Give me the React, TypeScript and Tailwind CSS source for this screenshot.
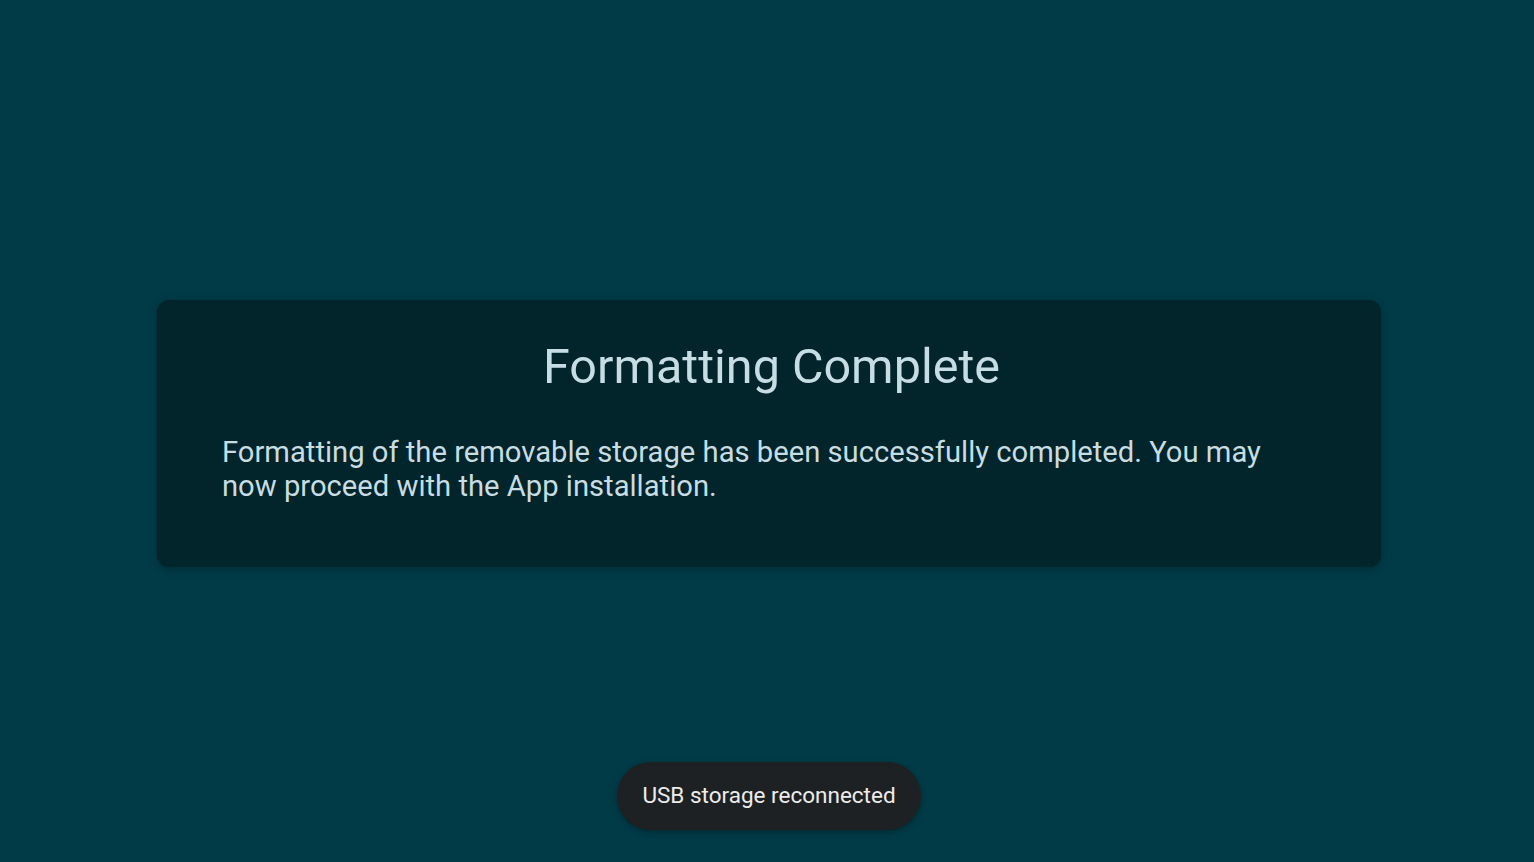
export default function App() {
  return (
    <div className="h-[862px] w-full overflow-hidden bg-[#003b47] font-['Roboto',sans-serif] flex flex-col items-center pt-[300px] pl-[4px]">
      <div className="w-[1224px] h-[267px] rounded-[12px] bg-[#02242b] shadow-[0_2px_8px_rgba(0,0,0,0.25)] pt-[38px] pl-[65px] pr-[60px]">
        <h1 className="text-center text-[48.5px] leading-[57px] text-[#c5dde3]">
          Formatting Complete
        </h1>
        <p className="mt-[40px] text-[29.2px] leading-[34px] text-[#c8dde2]">
          Formatting of the removable storage has been successfully completed. You may now proceed with the App installation.
        </p>
      </div>
      <div className="mt-[195px] h-[68px] px-[25px] flex items-center rounded-full bg-[#1e2124] shadow-[0_2px_6px_rgba(0,0,0,0.3)]">
        <span className="text-[22.5px] text-[#ececec]">USB storage reconnected</span>
      </div>
    </div>
  );
}
